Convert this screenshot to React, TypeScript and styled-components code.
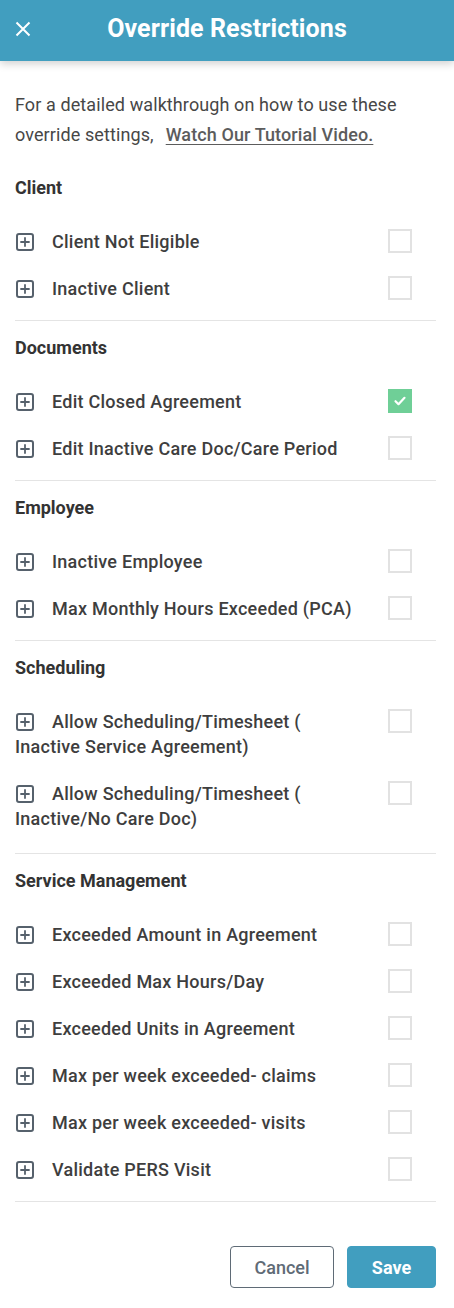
import styled, { createGlobalStyle } from 'styled-components';

const GlobalStyle = createGlobalStyle`
  html, body {
    margin: 0;
    padding: 0;
    background: #fff;
    font-family: Roboto, "Liberation Sans", Arial, sans-serif;
  }
  * { box-sizing: border-box; }
`;

const Page = styled.div`
  width: 454px;
  min-height: 1308px;
  background: #fff;
`;

const Header = styled.header`
  height: 61px;
  background-color: #419ebf;
  color: #fff;
  display: grid;
  grid-template-columns: 48px 1fr 48px;
  align-items: center;
  box-shadow: 0 3px 8px rgba(0, 0, 0, 0.18);
  position: relative;
  z-index: 1;
`;

const CloseButton = styled.button`
  background: none;
  border: 0;
  padding: 0 0 0 15px;
  height: 100%;
  display: flex;
  align-items: center;
  cursor: pointer;
  margin-top: -4px;
`;

const Title = styled.h1`
  margin: -4px 0 0;
  text-align: center;
  font-size: 25px;
  font-weight: 700;
  letter-spacing: 0.1px;
`;

const Body = styled.div`
  padding: 29px 18px 0 15px;
`;

const Intro = styled.p`
  margin: 0 0 26px;
  font-size: 18px;
  line-height: 30px;
  color: #474747;
  letter-spacing: 0.1px;
  a {
    margin-left: 12px;
    color: #5c5c5c;
    font-weight: 500;
    text-decoration: underline;
    text-underline-offset: 3px;
  }
`;

const Section = styled.section<{ $wrapped?: boolean }>`
  border-bottom: 1px solid #e4e4e4;
  padding-bottom: ${(p) => (p.$wrapped ? '22px' : '19px')};
  margin-bottom: 15px;
`;

const SectionTitle = styled.h3`
  margin: 0 0 29px;
  font-size: 18px;
  line-height: 24px;
  font-weight: 700;
  color: #333;
`;

const RowList = styled.div`
  display: flex;
  flex-direction: column;
  gap: 22px;
`;

const Row = styled.div`
  display: flex;
  align-items: flex-start;
  justify-content: space-between;
`;

const Label = styled.div`
  width: 352px;
  font-size: 18px;
  line-height: 25px;
  font-weight: 500;
  color: #3e3e3e;
  letter-spacing: 0.25px;
`;

const PlusIcon = styled.svg`
  display: inline-block;
  vertical-align: -3px;
  margin: 0 18px 0 1px;
`;

const Check = styled.span<{ $checked?: boolean }>`
  width: 24px;
  height: 24px;
  margin-right: 24px;
  flex-shrink: 0;
  display: flex;
  align-items: center;
  justify-content: center;
  border: ${(p) => (p.$checked ? 'none' : '2px solid #e2e2e2')};
  background: ${(p) => (p.$checked ? '#6fcf97' : '#fff')};
`;

const Footer = styled.div`
  display: flex;
  justify-content: flex-end;
  gap: 13px;
  padding-top: 29px;
`;

const Button = styled.button<{ $primary?: boolean }>`
  height: 42px;
  border-radius: 4px;
  font-family: inherit;
  font-size: 18px;
  cursor: pointer;
  padding: 0;
  width: ${(p) => (p.$primary ? '89px' : '104px')};
  font-weight: ${(p) => (p.$primary ? 700 : 500)};
  color: ${(p) => (p.$primary ? '#fff' : '#5f6b76')};
  background: ${(p) => (p.$primary ? '#419ebf' : '#fff')};
  border: ${(p) => (p.$primary ? '1px solid #419ebf' : '1px solid #5f6b76')};
`;

type Item = { label: string; checked?: boolean };
type Group = { title: string; items: Item[]; wrapped?: boolean };

const groups: Group[] = [
  {
    title: 'Client',
    items: [{ label: 'Client Not Eligible' }, { label: 'Inactive Client' }],
  },
  {
    title: 'Documents',
    items: [
      { label: 'Edit Closed Agreement', checked: true },
      { label: 'Edit Inactive Care Doc/Care Period' },
    ],
  },
  {
    title: 'Employee',
    items: [
      { label: 'Inactive Employee' },
      { label: 'Max Monthly Hours Exceeded (PCA)' },
    ],
  },
  {
    title: 'Scheduling',
    wrapped: true,
    items: [
      { label: 'Allow Scheduling/Timesheet ( Inactive Service Agreement)' },
      { label: 'Allow Scheduling/Timesheet ( Inactive/No Care Doc)' },
    ],
  },
  {
    title: 'Service Management',
    items: [
      { label: 'Exceeded Amount in Agreement' },
      { label: 'Exceeded Max Hours/Day' },
      { label: 'Exceeded Units in Agreement' },
      { label: 'Max per week exceeded- claims' },
      { label: 'Max per week exceeded- visits' },
      { label: 'Validate PERS Visit' },
    ],
  },
];

function Plus() {
  return (
    <PlusIcon width="18" height="18" viewBox="0 0 18 18" fill="none">
      <rect x="1" y="1" width="16" height="16" rx="2" stroke="#56616c" strokeWidth="2" />
      <path d="M9 5v8M5 9h8" stroke="#56616c" strokeWidth="1.8" strokeLinecap="round" />
    </PlusIcon>
  );
}

function App() {
  return (
    <Page>
      <GlobalStyle />
      <Header>
        <CloseButton aria-label="Close">
          <svg width="16" height="16" viewBox="0 0 16 16">
            <path d="M1.5 1.5l13 13M14.5 1.5l-13 13" stroke="#fff" strokeWidth="2" />
          </svg>
        </CloseButton>
        <Title>Override Restrictions</Title>
        <span />
      </Header>
      <Body>
        <Intro>
          For a detailed walkthrough on how to use these override settings,
          <a href="#">Watch Our Tutorial Video.</a>
        </Intro>
        {groups.map((group) => (
          <Section key={group.title} $wrapped={group.wrapped}>
            <SectionTitle>{group.title}</SectionTitle>
            <RowList>
              {group.items.map((item) => (
                <Row key={item.label}>
                  <Label>
                    <Plus />
                    {item.label}
                  </Label>
                  <Check $checked={item.checked}>
                    {item.checked && (
                      <svg width="14" height="14" viewBox="0 0 14 14">
                        <path
                          d="M2.5 7.2l3 3 6-6.4"
                          stroke="#fff"
                          strokeWidth="2.2"
                          fill="none"
                          strokeLinecap="round"
                          strokeLinejoin="round"
                        />
                      </svg>
                    )}
                  </Check>
                </Row>
              ))}
            </RowList>
          </Section>
        ))}
        <Footer>
          <Button>Cancel</Button>
          <Button $primary>Save</Button>
        </Footer>
      </Body>
    </Page>
  );
}

export default App;
